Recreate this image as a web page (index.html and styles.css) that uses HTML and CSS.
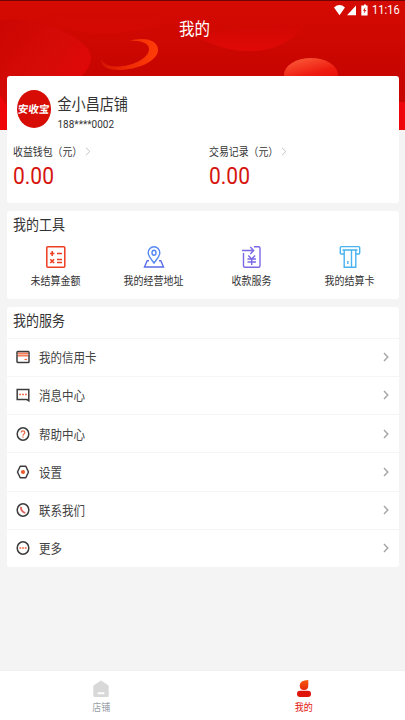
FILE: index.html
```html
<!DOCTYPE html>
<html lang="zh-CN">
<head>
<meta charset="utf-8">
<title>我的</title>
<link rel="stylesheet" href="styles.css">
</head>
<body>
<div class="app">
  <svg class="hero" viewBox="0 0 405 130" width="405" height="130">
    <defs>
      <linearGradient id="bg" x1="0" y1="0" x2="0" y2="1"><stop offset="0" stop-color="#d50b02"/><stop offset=".55" stop-color="#c80501"/><stop offset="1" stop-color="#c60502"/></linearGradient>
      <linearGradient id="blob" x1="0" y1="0" x2="1" y2="1"><stop offset="0" stop-color="#cb0602"/><stop offset=".45" stop-color="#d60b08"/><stop offset="1" stop-color="#e90307"/></linearGradient>
      <linearGradient id="bowl" x1="0" y1="0" x2="0" y2="1"><stop offset="0" stop-color="#d00702"/><stop offset="1" stop-color="#e00a08"/></linearGradient>
      <linearGradient id="ring" x1="0" y1="0" x2="1" y2="0"><stop offset="0" stop-color="#d51503"/><stop offset=".45" stop-color="#ee2a04"/><stop offset="1" stop-color="#ff3d08"/></linearGradient>
      <linearGradient id="ball" x1=".2" y1="0" x2=".6" y2="1"><stop offset="0" stop-color="#fb5a38"/><stop offset=".5" stop-color="#ee1c10"/><stop offset="1" stop-color="#e5070a"/></linearGradient>
    </defs>
    <path fill="url(#bg)" d="M0 0h405v130H0z"/>
    <path fill="#6e0301" d="M0 0h405v1H0z"/>
    <path fill="url(#bowl)" d="M62 25Q82 33 104 33Q136 33 160 23V14H50Z" opacity=".4"/>
    <path fill="url(#blob)" d="M0 20C22 18 42 21 60 30C78 38 91 48 91 57C91 66 86 71 81 77V130H0Z"/>
    <path fill="url(#bowl)" d="M196 37C214 45 228 51 250 51C274 51 292 42 304 26C270 22 230 28 196 37Z"/>
    <path fill="url(#ring)" d="M129 41C140 37 158 38 158 50C158 61 137 70 119 70C108 70 101 67 101 59C103 64 109 66.500 117 66.500C133 66.500 149 58 149 49C149 43 140 40 129 41Z"/>
    <ellipse cx="311" cy="75" rx="27" ry="17" fill="url(#ball)"/>
    <path fill="#ef060b" d="M0 126V95L8 108V130H0ZM397 102h8v28h-8z"/>
  </svg>

  <div class="status">
    <svg width="38" height="13" viewBox="0 0 38 13" fill="#fff">
      <path d="M0 3.4Q5.500-1.400 11 3.400L5.500 11.300ZM13 11.300L22 1.500V11.300ZM28.500 1.500H30V.4H32V1.500H33.600V11.600H27.300V1.500Z"/>
      <path d="M31.400 3.200L29 6.800H30.500L29.800 9.700L32.300 6H30.800Z" fill="#d20a02"/>
    </svg>
    <span class="clock tall">11:16</span>
  </div>
  <header class="title"><span class="tall">我的</span></header>

  <main>
    <section class="card account">
      <div class="profile">
        <div class="avatar"><span>安收宝</span></div>
        <div class="who">
          <div class="name"><span class="tall">金小昌店铺</span></div>
          <div class="phone"><span class="tall">188****0002</span></div>
        </div>
      </div>
      <div class="balances">
        <div class="balance">
          <div class="caption"><span class="tall">收益钱包<span class="paren">（</span>元<span class="paren">）</span></span><svg width="6" height="9" viewBox="0 0 6 9"><path d="M1 .8L4.800 4.500L1 8.200"/></svg></div>
          <div class="amount"><span>0.00</span></div>
        </div>
        <div class="balance">
          <div class="caption"><span class="tall">交易记录<span class="paren">（</span>元<span class="paren">）</span></span><svg width="6" height="9" viewBox="0 0 6 9"><path d="M1 .8L4.800 4.500L1 8.200"/></svg></div>
          <div class="amount"><span>0.00</span></div>
        </div>
      </div>
    </section>

    <section class="card tools">
      <h2><span class="tall">我的工具</span></h2>
      <div class="grid">
        <div class="tool">
          <svg width="22" height="24" viewBox="0 0 22 24" fill="none" stroke="#ed3d20" stroke-width="1.5"><rect x="1.800" y="1.800" width="18" height="20.400" rx="1"/><path d="M5 8.500H9.400M7.200 6.100V10.900M12 8.500H17M5.300 14.200L9.100 18M9.100 14.200L5.300 18M12 14.600H17M12 17.600H17"/></svg>
          <span class="tall">未结算金额</span>
        </div>
        <div class="tool">
          <svg width="22" height="24" viewBox="0 0 22 24" fill="none" stroke="#5588f2" stroke-width="1.4"><path d="M11 18C8 14 5.200 11.400 5.200 7.700A5.800 6 0 0 1 16.800 7.700C16.800 11.400 14 14 11 18Z"/><ellipse cx="11" cy="7.800" rx="2" ry="2.500"/><path d="M6 15.700H4.200L1.500 22H20.500L17.800 15.700H16" stroke="#5a6eea"/></svg>
          <span class="tall">我的经营地址</span>
        </div>
        <div class="tool">
          <svg width="22" height="24" viewBox="0 0 22 24" fill="none" stroke="#7a68e5" stroke-width="1.4"><path d="M2.500 8V20.800Q2.500 22.300 4 22.300H17.500Q19 22.300 19 20.800V3.200Q19 1.700 17.500 1.700H13M1 5.500H12.200M9.300 2L12.600 5.500L9.300 9M7.300 10.600L10.700 14L14.100 10.600M6.500 14H15M6.500 17H15M10.700 14V20"/></svg>
          <span class="tall">收款服务</span>
        </div>
        <div class="tool">
          <svg width="22" height="24" viewBox="0 0 22 24" fill="none" stroke="#48b3ee" stroke-width="1.4"><path d="M4.700 9H2.300Q1.300 9 1.300 8V2.600Q1.300 1.600 2.300 1.600H19.700Q20.700 1.600 20.700 2.600V8Q20.700 9 19.700 9H17.300M3.500 5H18.500M5.200 5V22.200H16.800V5M12.500 5V22M8.800 16V19"/></svg>
          <span class="tall">我的结算卡</span>
        </div>
      </div>
    </section>

    <section class="card services">
      <h2><span class="tall">我的服务</span></h2>
      <div class="row">
        <svg class="icon" viewBox="0 0 14 14"><path fill="#f47a58" stroke="none" d="M1.500 2.500H12.500V6.500H1.500Z"/><rect x="1" y="1.500" width="12" height="11" rx=".8"/><path d="M1.500 4.500H12.500" stroke="#fff" stroke-width=".5"/><path class="hot" d="M8.500 9.500H11"/></svg>
        <span class="tall">我的信用卡</span><svg class="go" viewBox="0 0 6 10"><path d="M1 1L4.800 5L1 9"/></svg>
      </div>
      <div class="row">
        <svg class="icon" viewBox="0 0 14 14"><path d="M1.200 1.500H12.800V12.800L11 11.600H1.200Z"/><path class="hot dots" d="M3.200 6.600H5M6.100 6.600H7.900M9 6.600H10.800"/></svg>
        <span class="tall">消息中心</span><svg class="go" viewBox="0 0 6 10"><path d="M1 1L4.800 5L1 9"/></svg>
      </div>
      <div class="row">
        <svg class="icon" viewBox="0 0 14 14"><ellipse cx="7" cy="7" rx="5.800" ry="6.200"/><path class="hot" d="M5.200 5.500Q5.200 3.800 7 3.800T8.800 5.500Q8.800 6.400 7.900 7Q7 7.500 7 8.700M7 9.600V10.800"/></svg>
        <span class="tall">帮助中心</span><svg class="go" viewBox="0 0 6 10"><path d="M1 1L4.800 5L1 9"/></svg>
      </div>
      <div class="row">
        <svg class="icon" viewBox="0 0 14 14"><path d="M4.200 1.200H9.800L12.500 7L9.800 12.800H4.200L1.500 7Z" stroke-linejoin="round"/><circle class="fill" cx="7" cy="7" r="2.100"/></svg>
        <span class="tall">设置</span><svg class="go" viewBox="0 0 6 10"><path d="M1 1L4.800 5L1 9"/></svg>
      </div>
      <div class="row">
        <svg class="icon" viewBox="0 0 14 14"><ellipse cx="7" cy="7" rx="5.800" ry="6.200"/><path class="hot phone-line" d="M5 3.800Q4.600 8.200 9.300 10"/></svg>
        <span class="tall">联系我们</span><svg class="go" viewBox="0 0 6 10"><path d="M1 1L4.800 5L1 9"/></svg>
      </div>
      <div class="row">
        <svg class="icon" viewBox="0 0 14 14"><ellipse cx="7" cy="7" rx="5.800" ry="6.200"/><path class="hot dots" d="M3.400 7H5.200M6.100 7H7.900M8.800 7H10.600"/></svg>
        <span class="tall">更多</span><svg class="go" viewBox="0 0 6 10"><path d="M1 1L4.800 5L1 9"/></svg>
      </div>
    </section>
  </main>

  <nav class="tabs">
    <div class="tab">
      <svg width="16" height="18" viewBox="0 0 16 18"><path d="M8 .5L15.200 5.300Q15.700 5.700 15.700 6.400V15.800Q15.700 17 14.500 17H1.500Q.3 17 .3 15.800V6.400Q.3 5.700 .8 5.300Z" fill="#d8d8d8"/><path d="M4.700 12.300H11.300V14.200H4.700Z" fill="#fff"/></svg>
      <span class="tall">店铺</span>
    </div>
    <div class="tab active">
      <svg width="16" height="18" viewBox="0 0 16 18"><defs><linearGradient id="me" x1="0" y1="0" x2="0" y2="1"><stop offset="0" stop-color="#f8590c"/><stop offset="1" stop-color="#e52a0c"/></linearGradient></defs><path d="M12.300 0V5.500Q12.300 10 8 10T3.700 5.500Q3.700 .2 12.300 0Z" fill="url(#me)"/><rect x="1" y="10.800" width="14" height="6.200" rx="3" fill="#df1408"/></svg>
      <span class="tall">我的</span>
    </div>
  </nav>
</div>
</body>
</html>
```
FILE: styles.css
```css
* { box-sizing: border-box; }
body {
  margin: 0;
  font-family: Roboto, "Noto Sans CJK SC", sans-serif;
  color: #333;
  background: #f4f4f4;
}
.app {
  position: relative;
  display: flex;
  flex-direction: column;
  width: 405px;
  height: 720px;
  overflow: hidden;
}
.hero { position: absolute; top: 0; left: 0; }

/* Glyphs are slightly taller than wide throughout the interface. */
.tall { display: inline-block; transform: scaleY(1.12); white-space: nowrap; }
.paren { font-family: "Noto Sans CJK TC", sans-serif; }

.status {
  position: relative;
  display: flex;
  justify-content: flex-end;
  align-items: center;
  height: 20px;
  padding-right: 6px;
  color: #fff;
}
.clock { width: 27px; font-size: 11px; line-height: 20px; letter-spacing: 0.1px; padding-top: 1px; }
.title {
  position: relative;
  height: 56px;
  padding-right: 16px;
  color: #fff;
  font-size: 15.5px;
  line-height: 19px;
  text-align: center;
}
main { position: relative; flex: 1; padding: 0 6.5px; }
.card { background: #fff; border-radius: 3px; }
.account { height: 127px; padding: 14px 6.5px 0; }
.profile { display: flex; height: 46px; padding-left: 3.5px; }
.avatar {
  display: flex;
  justify-content: center;
  align-items: center;
  width: 34px;
  height: 38px;
  border-radius: 50%;
  background: #d60c05;
  color: #fff;
  font-size: 10.5px;
  font-weight: 700;
}
.avatar span { white-space: nowrap; transform: translateY(-1px) skewX(-6deg); }
.who { margin-left: 7px; }
.name { height: 28px; font-size: 14.1px; line-height: 29px; }
.phone { height: 12px; font-size: 10px; line-height: 14px; }
.balances { display: flex; }
.balance { flex: none; width: 196px; }
.balance:last-child { width: 180px; }
.caption { display: flex; align-items: center; height: 31px; font-size: 9.9px; }
.caption svg { margin-left: 3px; fill: none; stroke: #bbb; stroke-width: 0.9; }
.amount { height: 20px; color: #d6150f; font-size: 21px; line-height: 19px; }
.amount span { display: inline-block; transform: scaleY(1.18); }

h2 { margin: 0; padding-left: 6.5px; font-size: 13px; font-weight: 400; }
.tools { height: 88px; margin-top: 8px; }
.tools h2 { height: 34px; line-height: 30px; }
.grid { display: grid; grid-template-columns: repeat(4, 98px); }
.tool { display: flex; flex-direction: column; align-items: center; font-size: 10px; line-height: 14px; }
.tool .tall { margin-top: 6px; }

.services { height: 260px; margin-top: 8px; }
.services h2 { height: 30.5px; line-height: 30px; }
.row {
  display: flex;
  align-items: center;
  height: 38.25px;
  padding: 0 10px 0 9px;
  border-top: 1px solid #f5f5f5;
  color: #444;
  font-size: 11.5px;
}
.row .tall { margin-top: -2px; }
.icon { width: 14px; height: 14px; margin-right: 9.5px; fill: none; stroke: #3c3c3c; stroke-width: 1.5; }
.icon .hot { stroke: #f0643f; stroke-width: 1.2; }
.icon .dots { stroke-width: 1.5; }
.icon .phone-line { stroke: #e0605a; stroke-width: 1.8; }
.icon .fill { fill: #f05a28; stroke: none; }
.go { width: 6px; height: 10px; margin-left: auto; fill: none; stroke: #a4a4a4; stroke-width: 1.4; }

.tabs { position: relative; display: flex; height: 50px; background: #fff; border-top: 1px solid #f0f0f0; }
.tab {
  display: flex;
  flex: 1;
  flex-direction: column;
  align-items: center;
  padding-top: 9px;
  color: #9a9fa8;
  font-size: 9px;
  line-height: 12px;
}
.tab .tall { margin-top: 4px; }
.tab.active { color: #df1408; }
```
